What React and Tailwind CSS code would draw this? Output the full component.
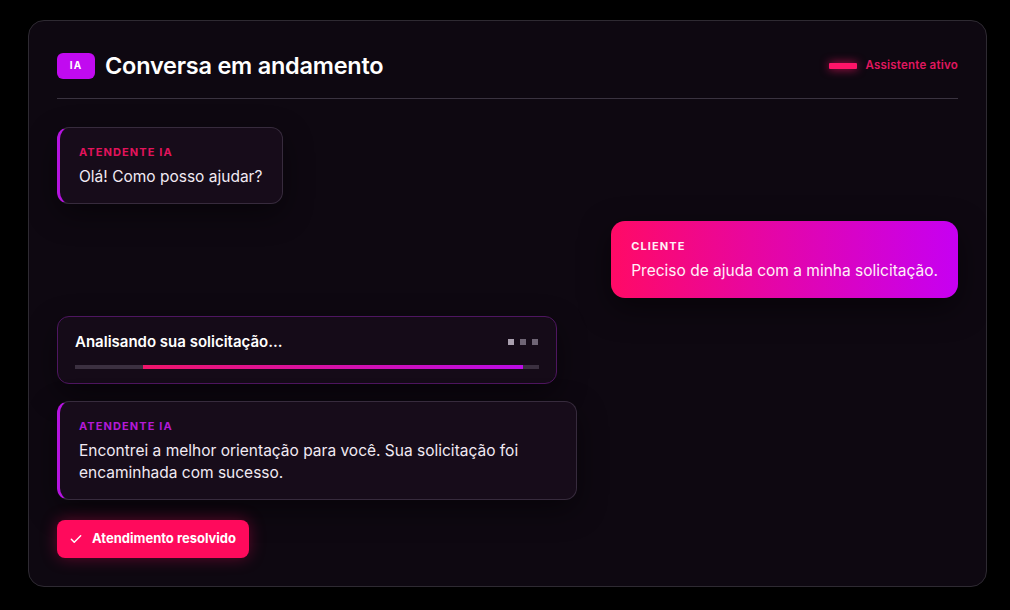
import React from "react";

const Bubble = ({ label, labelClass, children }) => (
  <div className="rounded-xl border border-l-[3px] border-[#372b3d] border-l-[#b514e0] bg-[#170c1a] pl-[19px] pr-5 pt-4 pb-[15px] shadow-[0_10px_30px_rgba(0,0,0,0.45)]">
    <div className={`text-[11px] font-bold tracking-[0.1em] leading-4 ${labelClass}`}>{label}</div>
    <div className="mt-[6px] text-[15.5px] leading-[22px] text-[#f1eaf3]">{children}</div>
  </div>
);

const App = () => {
  return (
    <div
      className="h-screen overflow-hidden bg-black pl-7 pr-[23px] pt-5"
      style={{ fontFamily: "Inter, 'Noto Sans', sans-serif" }}
    >
      <div className="rounded-2xl border border-[#2e2a32] bg-[#0e0811] px-7 pt-7 pb-7">
        <header className="flex items-center justify-between border-b border-[#3a3340] pb-4">
          <div className="flex h-[33px] items-center gap-[10px]">
            <span className="flex h-[26px] w-[38px] items-center justify-center rounded-md bg-[#c10af0] text-[10px] font-bold tracking-[0.12em] text-white">
              IA
            </span>
            <h1 className="text-[23.5px] font-semibold tracking-[-0.01em] text-white">Conversa em andamento</h1>
          </div>
          <div className="flex items-center gap-2">
            <span className="h-[6px] w-[28px] rounded-[1px] bg-[#ff1468] shadow-[0_0_10px_rgba(255,20,104,0.8)]" />
            <span className="text-[11.5px] font-semibold tracking-[0.02em] text-[#e0175f]">Assistente ativo</span>
          </div>
        </header>

        <div className="mt-7 flex flex-col">
          <div className="self-start">
            <Bubble label="ATENDENTE IA" labelClass="text-[#e3135c]">
              Olá! Como posso ajudar?
            </Bubble>
          </div>

          <div className="mt-[17px] self-end rounded-[14px] bg-linear-to-r/srgb from-[#ff0a66] to-[#c600f2] px-5 pt-[17px] pb-4 shadow-[0_10px_30px_rgba(0,0,0,0.5)]">
            <div className="text-[11px] font-bold tracking-[0.1em] leading-4 text-[#fff1f7]">CLIENTE</div>
            <div className="mt-[6px] text-[15.5px] leading-[22px] text-[#fff1f8]">
              Preciso de ajuda com a minha solicitação.
            </div>
          </div>

          <div className="mt-[18px] w-[500px] rounded-xl border border-[#4e1660] bg-[#150b18] px-[17px] pt-[15px] pb-[14px] shadow-[0_10px_30px_rgba(0,0,0,0.45)]">
            <div className="flex items-center justify-between">
              <span className="text-[15px] font-semibold leading-5 text-white">Analisando sua solicitação...</span>
              <span className="flex items-center gap-[6px] pr-[1px]">
                <span className="h-[6px] w-[6px] bg-[#a99fae]" />
                <span className="h-[6px] w-[6px] bg-[#6f6575]" />
                <span className="h-[6px] w-[6px] bg-[#6f6575]" />
              </span>
            </div>
            <div className="mt-[13px] flex h-[4px] bg-[#3b3040]">
              <div className="w-[68px]" />
              <div className="h-full w-[380px] bg-linear-to-r/srgb from-[#f0156a] to-[#bb0ce6]" />
            </div>
          </div>

          <div className="mt-[17px] w-[520px]">
            <Bubble label="ATENDENTE IA" labelClass="text-[#b31ad6]">
              Encontrei a melhor orientação para você. Sua solicitação foi encaminhada com sucesso.
            </Bubble>
          </div>

          <div className="mt-5 self-start">
            <button className="flex h-[38px] items-center gap-[9px] rounded-lg bg-[#ff0a5c] pl-3 pr-[13px] text-[13px] font-bold text-white shadow-[0_0_16px_rgba(255,10,92,0.35)]">
              <svg width="14" height="14" viewBox="0 0 24 24" fill="none" stroke="currentColor" strokeWidth="2.5" strokeLinecap="round" strokeLinejoin="round">
                <path d="M4 12.5l5 5L20 6.5" />
              </svg>
              Atendimento resolvido
            </button>
          </div>
        </div>
      </div>
    </div>
  );
};

export default App;
